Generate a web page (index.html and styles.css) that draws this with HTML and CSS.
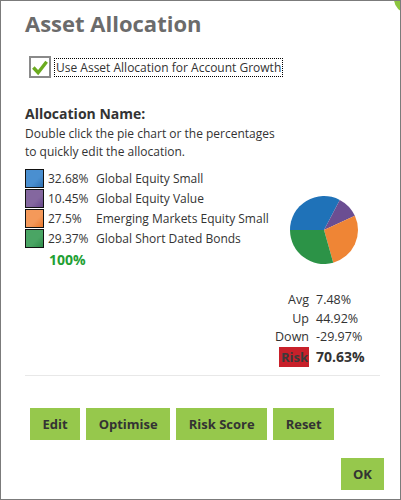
FILE: index.html
```html
<!DOCTYPE html>
<html lang="en">
<head>
	<meta charset="UTF-8">
	<title>Asset Allocation</title>
	<link rel="stylesheet" href="styles.css">
</head>
<body>
	<div class="dialog">
		<span class="closeDot"></span>
		<h1 class="title">Asset Allocation</h1>

		<div class="useRow">
			<span class="checkBox">
				<svg width="19" height="19" viewBox="0 0 19 19"><path d="M2.5 9.5 L7.5 15 L16.5 3.5" fill="none" stroke="#6bab1f" stroke-width="3.6"/></svg>
			</span>
			<span class="useLabel">Use Asset Allocation for Account Growth</span>
		</div>

		<h2 class="allocName">Allocation Name:</h2>
		<p class="hint">Double click the pie chart or the percentages<br>to quickly edit the allocation.</p>

		<div class="allocBox">
			<div class="legend">
				<div class="row"><span class="swatch blue"></span><span class="pct">32.68%</span><span>Global Equity Small</span></div>
				<div class="row"><span class="swatch purple"></span><span class="pct">10.45%</span><span>Global Equity Value</span></div>
				<div class="row"><span class="swatch orange"></span><span class="pct">27.5%</span><span>Emerging Markets Equity Small</span></div>
				<div class="row"><span class="swatch green"></span><span class="pct">29.37%</span><span>Global Short Dated Bonds</span></div>
				<div class="total">100%</div>
			</div>
			<svg class="pie" width="70" height="70" viewBox="0 0 70 70">
				<path d="M35,35 L1,35 A34,34 0 0 1 50.78,4.88 Z" fill="#1f72b8"/>
				<path d="M35,35 L50.78,4.88 A34,34 0 0 1 65.88,20.78 Z" fill="#6b4e92"/>
				<path d="M35,35 L65.88,20.78 A34,34 0 0 1 44.22,67.73 Z" fill="#ef8535"/>
				<path d="M35,35 L44.22,67.73 A34,34 0 0 1 1,35 Z" fill="#2c9347"/>
			</svg>
		</div>

		<div class="stats">
			<span class="lbl">Avg</span><span>7.48%</span>
			<span class="lbl">Up</span><span>44.92%</span>
			<span class="lbl">Down</span><span>-29.97%</span>
			<span class="lbl"><b class="risk">Risk</b></span><span class="riskVal">70.63%</span>
		</div>

		<hr class="line">

		<div class="buttons">
			<button class="btn">Edit</button>
			<button class="btn">Optimise</button>
			<button class="btn">Risk Score</button>
			<button class="btn">Reset</button>
		</div>

		<div class="footer">
			<button class="btn ok">OK</button>
		</div>
	</div>
</body>
</html>
```

FILE: styles.css
```css
*{
	margin: 0;
	padding: 0;
	box-sizing: border-box;
}
body{
	font-family: "Open Sans", "Noto Sans", sans-serif;
	color: #333;
	background: #fff;
}
.dialog{
	width: 401px;
	height: 500px;
	border: 1px solid #7b7b7b;
	position: relative;
	overflow: hidden;
	padding: 0 16px 0 24px;
}
.closeDot{
	position: absolute;
	right: -22px;
	top: -16px;
	width: 28px;
	height: 28px;
	border-radius: 50%;
	background: #8cc63f;
}
.title{
	font-size: 22px;
	line-height: 30px;
	font-weight: 700;
	color: #6b6b6b;
	margin-top: 7px;
}
.useRow{
	display: flex;
	align-items: center;
	margin-top: 18px;
	margin-left: 4px;
}
.checkBox{
	width: 22px;
	height: 22px;
	border: 2px solid #8a8a8a;
	display: flex;
	align-items: center;
	justify-content: center;
}
.useLabel{
	font-size: 12px;
	line-height: 17px;
	margin-left: 4px;
	outline: 1px dotted #000;
	padding: 0 1px;
}
.allocName{
	font-size: 14px;
	font-weight: 700;
	line-height: 18px;
	margin-top: 27px;
}
.hint{
	font-size: 12px;
	line-height: 18px;
	margin-top: 2px;
}
.allocBox{
	display: flex;
	justify-content: space-between;
	margin-top: 7px;
}
.legend .row{
	display: flex;
	align-items: center;
	height: 20px;
	font-size: 12px;
}
.swatch{
	width: 19px;
	height: 19px;
	border: 1px solid #111;
	margin-right: 4px;
}
.swatch.blue{ background: linear-gradient(135deg, #4a8fd0 60%, #2f6fb0); }
.swatch.purple{ background: linear-gradient(135deg, #84679f 60%, #66478a); }
.swatch.orange{ background: linear-gradient(135deg, #f4995a 60%, #e8772a); }
.swatch.green{ background: linear-gradient(135deg, #4aa564 60%, #2e8a48); }
.pct{
	width: 48px;
}
.total{
	color: #22a033;
	font-weight: 700;
	font-size: 14px;
	margin: 2px 0 0 24px;
}
.pie{
	margin: 27px 25px 0 0;
}
.stats{
	display: grid;
	grid-template-columns: 60px auto;
	column-gap: 7px;
	row-gap: 0;
	font-size: 12.5px;
	line-height: 18.5px;
	margin: 22px 0 0 224px;
}
.lbl{
	text-align: right;
}
.risk{
	display: inline-block;
	background: #c8202a;
	color: #3a3a3a;
	line-height: 20px;
	padding: 0 1px 0 2px;
	font-size: 13px;
}
.riskVal{
	font-weight: 700;
	font-size: 14px;
	line-height: 20px;
}
.line{
	border: 0;
	border-top: 1px solid #e8e8e8;
	margin: 8px 4px 0 0;
}
.buttons{
	display: flex;
	gap: 6px;
	margin: 32px 0 0 5px;
}
.btn{
	font-family: inherit;
	font-size: 13px;
	font-weight: 700;
	color: #333;
	background: #96c84c;
	border: 0;
	height: 32px;
	padding: 0 12.5px;
}
.footer{
	display: flex;
	justify-content: flex-end;
	margin-top: 18px;
}
.ok{
	width: 43px;
	padding: 0;
}
```
